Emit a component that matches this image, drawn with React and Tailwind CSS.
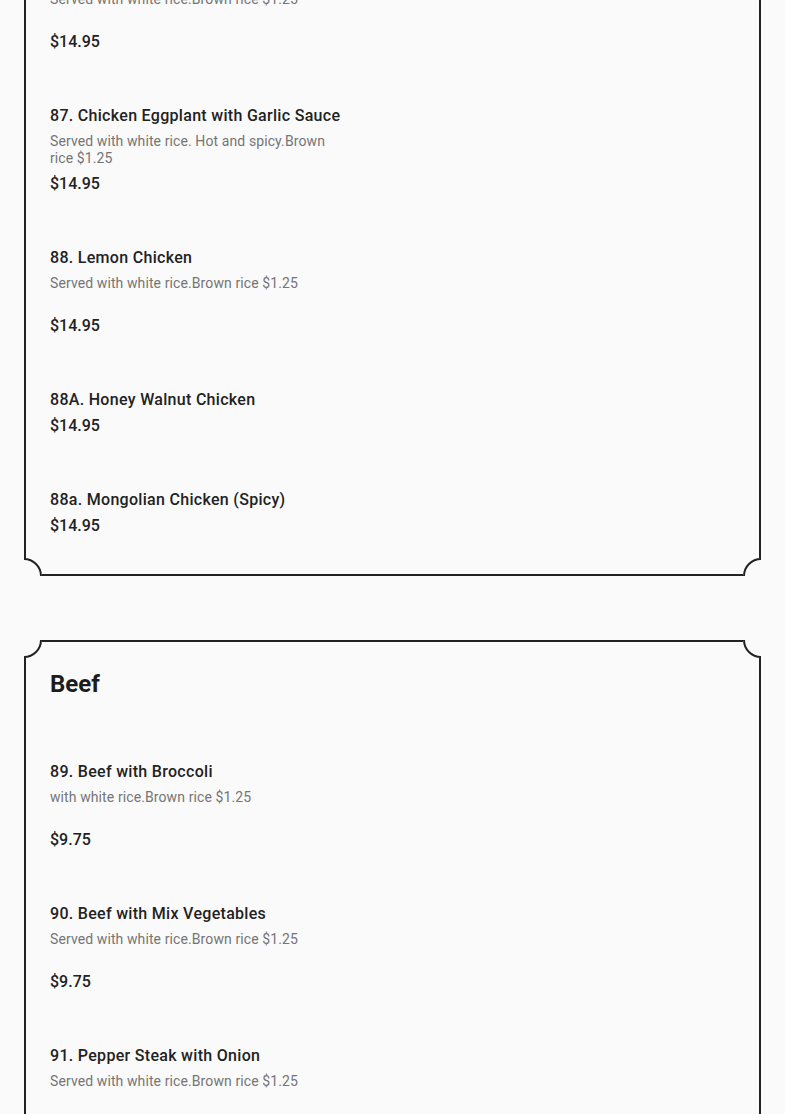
const SECTIONS = [
  {
    name: "Chicken",
    items: [
      {
        name: "85. Chicken with Broccoli",
        desc: "Served with white rice.Brown rice $1.25",
        price: "$14.95",
      },
      {
        name: "86. Chicken with Mix Vegetables",
        desc: "Served with white rice.Brown rice $1.25",
        price: "$14.95",
      },
      {
        name: "87. Chicken Eggplant with Garlic Sauce",
        desc: "Served with white rice. Hot and spicy.Brown rice $1.25",
        price: "$14.95",
      },
      {
        name: "88. Lemon Chicken",
        desc: "Served with white rice.Brown rice $1.25",
        price: "$14.95",
      },
      { name: "88A. Honey Walnut Chicken", price: "$14.95" },
      { name: "88a. Mongolian Chicken (Spicy)", price: "$14.95" },
    ],
  },
  {
    name: "Beef",
    items: [
      {
        name: "89. Beef with Broccoli",
        desc: "with white rice.Brown rice $1.25",
        price: "$9.75",
      },
      {
        name: "90. Beef with Mix Vegetables",
        desc: "Served with white rice.Brown rice $1.25",
        price: "$9.75",
      },
      {
        name: "91. Pepper Steak with Onion",
        desc: "Served with white rice.Brown rice $1.25",
        price: "$9.75",
      },
      {
        name: "92. Beef with Snow Peas",
        desc: "Served with white rice.Brown rice $1.25",
        price: "$9.75",
      },
    ],
  },
];

function Corner({ pos }) {
  const box = {
    tl: "-top-[2px] -left-[2px]",
    tr: "-top-[2px] -right-[2px]",
    bl: "-bottom-[2px] -left-[2px]",
    br: "-bottom-[2px] -right-[2px]",
  }[pos];
  const ring = {
    tl: "-top-[18px] -left-[18px]",
    tr: "-top-[18px] -right-[18px]",
    bl: "-bottom-[18px] -left-[18px]",
    br: "-bottom-[18px] -right-[18px]",
  }[pos];
  return (
    <div className={`absolute ${box} w-[18px] h-[18px] overflow-hidden bg-[#fafafa]`}>
      <div className={`absolute ${ring} w-[36px] h-[36px] rounded-full border-2 border-[#222]`} />
    </div>
  );
}

function MenuItem({ item }) {
  return (
    <div className="pt-[50px] w-[296px]">
      <h3 className="text-[16px] leading-[24px] font-medium tracking-[0.3px] text-[#222] whitespace-nowrap">
        {item.name}
      </h3>
      {item.desc ? (
        <p className="mt-[5px] min-h-[34px] text-[14px] leading-[17px] tracking-[0.1px] text-[#757575]">
          {item.desc}
        </p>
      ) : null}
      <div
        className={`${item.desc ? "mt-[5px]" : "mt-[2px]"} text-[16px] leading-[24px] font-medium text-[#222]`}
      >
        {item.price}
      </div>
    </div>
  );
}

function Section({ section }) {
  return (
    <section className="relative mx-6 border-2 border-[#222] px-6 pt-[26px] pb-[36px]">
      <Corner pos="tl" />
      <Corner pos="tr" />
      <Corner pos="bl" />
      <Corner pos="br" />
      <h2 className="mb-[10px] text-[24px] leading-[32px] font-bold text-[#1c1c1c]">
        {section.name}
      </h2>
      {section.items.map((item) => (
        <MenuItem key={item.name} item={item} />
      ))}
    </section>
  );
}

export default function App() {
  return (
    <div
      className="h-[1114px] overflow-hidden bg-[#fafafa]"
      style={{ fontFamily: "Roboto, 'Liberation Sans', sans-serif" }}
    >
      <div className="-mt-[300px] flex flex-col gap-[64px]">
        {SECTIONS.map((section) => (
          <Section key={section.name} section={section} />
        ))}
      </div>
    </div>
  );
}
